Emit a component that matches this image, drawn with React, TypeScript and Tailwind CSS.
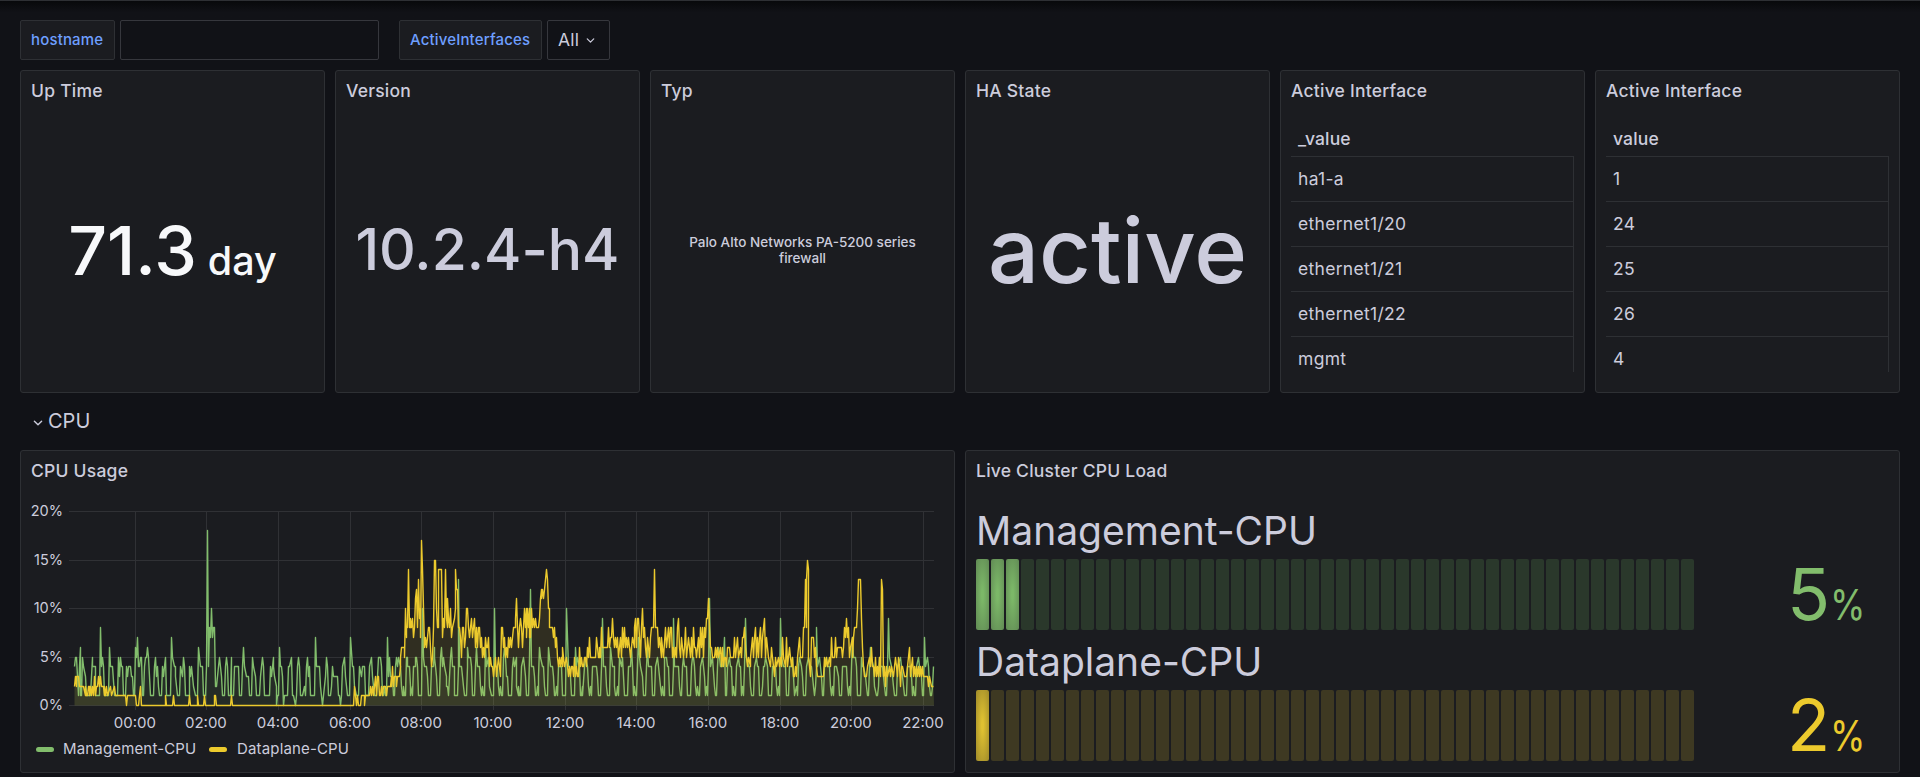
import type { ReactNode } from "react";

type Point = [number, number];

const GREEN = "#82bd6c";
const YELLOW = "#ecca2d";

/* Samples are "offset:percent"; three offset units make one pixel, from x = 60. */
const parse = (text: string, base: number): Point[] =>
  text
    .trim()
    .split(/[\s,]+/)
    .map((pair) => {
      const [x, v] = pair.split(":").map(Number);
      return [x + base, v] as Point;
    });

const managementNight = parse(
  `44:4,46:5,49:5,52:3,54:1,57:4,60:6,62:1,65:1,67:5,71:4,76:3,79:1,90:1,93:3,96:5,98:4,105:4,107:1,118:1,122:8,124:4,128:5,131:4,134:1,146:1,149:6,151:4,158:4,162:1,172:1,175:5,178:3,181:5,183:4,188:4,191:1,197:1,200:4,203:3,206:4,211:4,213:3,217:3,219:1,224:1,227:6,230:5,233:7,236:4,239:4,242:5,244:5,247:1,251:1,254:4,257:5,260:5,263:6,266:5,270:1,280:1,283:4,286:5,289:3,292:4,295:2,298:1,304:1,307:4,310:3,313:4,317:5,319:1,331:1,335:7,338:5,342:4,345:4,347:3,352:1,359:1,362:4,366:3,370:5,373:4,377:1,387:1,389:4,392:3,395:4,398:3,401:2,405:1,413:1,416:6,419:5,422:4,428:4,431:1,437:1,440:4,442:18,445:4,448:8,451:7,455:10,458:7,461:8,464:8,465:2,469:2,473:3,476:4,479:5,483:3,486:1,493:1,496:4,500:5,503:4,506:1,510:1,513:5,515:1,520:1,523:4,535:4,538:1,544:1,547:4,550:6,553:4,559:3,565:3,567:1,574:1,577:5,580:4,586:3,588:1,598:1,601:3,605:4,608:5,610:4,613:1,628:1,631:4,634:3,639:5,641:4,644:3,648:2,650:0,653:1,656:1,659:6,661:4,665:4,668:3,671:0,674:1,682:1,685:4,689:4,694:5,697:1,701:1,705:0,708:1,712:4,716:5,719:4,721:1,728:1,733:2,736:1,740:4,742:5,745:3,748:4,750:1,763:1,767:7,770:4,778:4,782:2,787:0,790:1,795:3,799:5,803:4,806:1,812:1,814:2,818:4,821:3,832:3,834:1,839:1,841:0,844:1,848:4,854:5,857:3,861:1,869:1,872:7,876:4,880:4,884:2,888:1,896:1,899:4,903:3,906:4,914:4,917:1,925:1,928:4,933:5,938:3,944:1,950:1,953:3,956:5`,
  0,
);

const managementDay = parse(
  `0:5,4:4,6:1,10:1,13:2,15:1,18:1,21:7,24:3,28:5,31:3,36:3,39:1,44:1,47:4,50:5,53:4,56:5,60:4,63:2,66:1,69:1,71:2,73:1,76:1,78:5,81:5,83:4,87:4,90:2,92:1,96:2,98:1,101:4,105:4,107:5,109:5,113:4,116:1,124:1,127:10,130:5,133:4,139:4,142:3,146:1,151:1,154:4,160:4,162:6,164:5,167:4,170:3,173:1,179:1,182:5,184:6,187:4,191:5,194:4,198:3,200:2,203:2,205:1,209:3,212:5,215:6,218:4,222:4,224:1,231:1,234:4,236:13,239:4,245:4,247:3,251:2,254:1,258:1,261:4,263:6,266:5,270:5,273:4,276:1,284:1,287:4,290:6,293:4,299:4,301:2,304:1,306:2,309:1,313:1,316:6,319:4,326:5,329:2,333:1,339:1,343:10,347:4,353:4,356:2,359:1,361:2,364:1,367:1,370:5,373:6,376:5,378:3,382:3,385:1,393:1,396:4,400:5,403:4,408:5,410:2,414:1,416:2,419:1,422:1,425:4,430:5,434:4,437:3,440:1,446:1,449:5,451:12,454:4,460:4,463:3,466:1,469:1,471:2,474:1,476:3,479:6,482:5,486:4,491:4,494:2,497:1,501:1,504:6,507:5,511:4,517:4,520:3,523:1,527:1,529:2,531:1,534:4,543:4,546:1,555:1,558:10,562:7,564:4,569:4,572:3,575:1,582:1,585:6,588:4,592:5,598:4,600:1,604:1,606:2,608:1,612:4,617:5,621:4,625:2,628:1,632:2,634:1,638:4,648:4,651:3,655:1,661:1,663:4,666:9,669:4,675:4,678:2,682:1,689:1,692:6,696:4,702:4,704:2,707:1,710:1,713:2,715:1,719:5,724:4,728:5,731:3,734:1,741:1,744:4,750:4,755:6,758:4,761:1,763:2,766:1,770:1,774:7,777:5,781:4,786:3,789:1,795:1,798:4,803:6,806:4,813:4,816:1,824:1,827:4,831:5,834:4,839:3`,
  960,
);

const managementEvening = parse(
  `0:2,3:1,6:2,9:1,12:1,14:5,18:5,21:4,26:4,28:1,36:1,39:4,41:9,44:4,55:4,57:2,60:1,64:1,67:4,70:5,74:4,80:4,83:1,91:1,94:4,97:5,101:5,104:4,107:2,110:1,113:2,116:1,119:1,122:4,126:5,130:4,133:3,136:1,140:2,142:1,145:4,148:11,151:4,158:5,162:2,166:1,170:1,173:4,176:6,180:4,187:4,191:5,194:7,196:1,199:1,203:4,208:5,212:4,215:4,217:1,220:2,223:1,227:1,230:4,235:5,238:4,242:4,244:1,247:2,250:1,254:4,257:9,260:5,264:4,268:4,271:2,275:1,279:1,283:4,290:5,293:4,296:4,299:1,303:1,306:2,309:4,313:4,317:5,321:4,324:1,333:1,336:4,345:4,349:2,352:1,356:2,359:1,362:9,365:5,370:4,376:4,379:1,386:1,389:4,393:4,398:5,400:3,404:1,408:2,411:1,414:4,419:5,425:4,428:3,431:1,436:1,440:4,445:5,450:4,453:4,456:3,459:2,462:1,465:2,468:4,470:8,473:4,479:5,483:3,486:1,491:1,494:4,499:5,503:4,508:4,511:2,514:1,517:2,520:1,523:4,528:4,534:3,537:1,545:1,548:4,559:4,562:2,565:1,568:2,571:1,574:4,577:7,580:5,585:5,588:4,592:1,600:1,604:5,607:4,611:4,615:3,618:2,621:1,625:1,627:4,632:6,635:5,641:4,644:2,648:1,652:1,655:2,658:5,662:4,668:4,672:2,675:1,680:1,683:4,686:9,689:5,693:4,697:3,701:2,704:1,710:1,713:4,720:5,724:4,728:3,732:1,738:1,742:4,750:4,754:3,757:1,760:2,763:1,766:1,769:4,774:5,778:4,783:3,786:1,790:1,794:7,797:4,801:5,804:4,807:2,811:1,815:1,818:2,821:4`,
  1800,
);

const dataplaneNight = parse(
  `43:2,46:3,48:2,50:3,56:3,58:2,70:2,75:1,77:2,79:1,82:1,84:2,87:2,89:1,92:2,95:1,98:2,100:1,102:3,104:3,106:1,109:2,113:2,116:3,119:2,122:3,125:2,130:2,132:1,134:2,137:1,140:2,142:1,151:2,154:1,164:2,167:1,196:1,198:0,201:1,227:1,230:0,236:0,238:1,241:2,244:0,315:0,317:1,320:0,338:0,341:1,344:0,386:0,388:1,391:0,411:0,413:1,416:0,431:0,434:1,437:0,462:0,464:1,466:1,469:0,511:0,514:1,518:0,880:0,883:2,886:1,889:0,892:1,895:0,902:0,905:1,912:1,914:0,916:1,928:1,930:2,933:1,936:2,940:1,943:2,946:3,949:1,952:3,955:3,958:1`,
  0,
);

const dataplaneDay = parse(
  `0:1,3:2,6:1,9:2,16:2,18:1,20:1,22:2,30:2,33:3,35:2,37:4,40:2,44:3,48:3,50:2,52:3,58:3,60:4,62:5,64:6,72:6,74:5,76:10,78:7,80:8,83:8,86:14,88:8,90:8,92:9,94:8,97:9,100:7,103:8,106:11,109:12,112:8,116:13,118:9,121:10,122:7,125:17,127:14,130:10,133:6,136:7,139:6,142:7,146:8,149:8,151:6,155:4,158:5,161:8,162:15,167:15,169:10,172:8,174:8,176:14,185:14,186:7,189:9,192:8,196:14,198:9,201:8,203:11,206:9,208:8,211:10,214:7,218:8,222:9,225:10,227:14,230:12,233:12,235:8,238:8,241:7,243:5,246:8,250:8,252:6,257:7,260:10,263:10,265:8,268:7,272:8,275:9,278:7,281:8,284:9,286:6,289:8,292:6,295:8,298:8,300:6,303:7,306:5,309:6,312:5,316:7,320:6,323:6,325:7,328:4,331:5,334:4,337:4,341:3,344:4,347:5,350:3,353:4,356:5,360:3,362:3,365:8,368:8,370:6,373:7,376:5,378:6,381:5,384:7,387:6,391:7,394:6,397:7,400:8,405:8,407:9,409:11,412:8,415:6,418:8,421:9,424:8,427:6,430:8,433:10,435:8,438:10,440:7,443:10,445:8,447:10,449:7,452:7,454:10,457:8,460:9,463:8,466:9,469:8,475:8,478:9,480:11,483:12,485:11,488:12,490:11,493:12,496:13,499:14,502:13,505:10,507:10,509:8,517:8,519:7,522:8,525:6,528:7,531:5,534:4,537:5,540:4,543:5,546:4,548:6,551:5,554:4,558:5,562:4,565:3,568:4,571:3,573:4,578:4,581:3,584:5,586:3,589:4,592:3,595:3,598:6,600:4,603:5,606:4,609:4,612:5,617:5,620:4,623:6,626:5,629:7,632:5,645:5,648:7,651:6,654:5,657:5,659:6,662:5,664:8,667:6,682:6,684:8,687:6,690:7,694:7,697:9,700:7,703:6,707:7,710:6,712:7,715:5,718:6,722:7,724:5,727:8,730:6,733:8,736:6,739:7,742:6,745:7,748:6,751:5,755:6,758:7,762:6,764:8,767:9,770:6,773:9,775:9,778:7,780:5,783:8,787:10,790:7,793:8,796:6,799:5,802:7,805:6,808:5,811:7,814:8,820:8,824:14,827:8,833:8,836:6,839:7`,
  960,
);

const dataplaneEvening = parse(
  `0:6,3:5,5:7,8:6,11:5,15:8,18:6,24:8,27:6,31:8,34:8,37:5,40:6,43:5,46:6,49:5,53:8,56:9,59:6,62:5,65:7,69:5,72:6,75:8,79:5,82:6,86:7,90:5,93:7,96:5,100:8,103:6,107:6,110:5,114:7,118:5,120:8,123:6,127:8,130:5,133:8,137:7,140:9,143:9,146:11,149:8,152:6,155:6,158:5,163:5,166:6,169:5,172:6,176:5,180:6,184:4,187:6,190:4,193:5,196:5,199:4,203:6,209:6,211:5,220:5,223:7,226:5,230:6,233:7,236:5,240:6,243:5,246:7,250:7,253:8,256:6,259:5,263:4,266:5,270:4,272:5,276:7,279:5,282:7,286:8,289:5,292:7,295:5,298:7,301:8,304:5,308:7,313:9,316:5,319:7,323:6,326:5,330:4,333:6,336:5,340:4,343:3,346:5,350:4,354:5,358:4,361:5,365:4,368:7,371:5,375:4,379:7,383:4,387:6,390:5,394:4,397:5,399:3,404:3,407:4,410:3,413:5,418:7,422:5,427:5,430:8,434:8,436:13,439:8,440:13,443:15,445:14,446:5,449:4,452:3,455:7,461:7,464:5,467:6,470:4,473:3,490:3,493:5,497:4,500:5,503:4,507:5,510:4,514:7,517:5,522:5,527:7,530:5,533:6,545:6,547:5,550:6,553:8,556:7,559:9,562:7,565:8,568:5,572:6,576:7,578:5,581:7,583:8,589:8,592:10,595:13,602:13,604:9,608:6,611:4,614:3,620:3,623:4,627:5,630:4,633:6,636:4,640:4,643:3,646:5,649:3,652:4,655:3,658:5,661:3,665:13,668:12,670:3,673:4,677:2,680:4,683:3,687:4,690:3,695:4,699:3,702:4,705:5,708:4,712:3,715:5,718:4,721:2,724:4,728:4,732:3,740:3,743:4,747:6,750:3,753:4,757:5,760:3,763:4,766:3,769:4,772:3,775:4,778:3,781:4,784:3,787:4,790:3,802:3,806:2,809:3,814:2,821:2`,
  1800,
);

const management = [...managementNight, ...managementDay, ...managementEvening];
const dataplane = [...dataplaneNight, ...dataplaneDay, ...dataplaneEvening];

const toLine = (points: Point[]) =>
  points
    .map(([x, v], i) => `${i ? "L" : "M"}${Math.round(60 + (x - 1) / 3) + 0.5} ${Math.round(705 - v * 9.7) + 0.5}`)
    .join("");

const toArea = (points: Point[]) => `${toLine(points)}L934 705.5L74.5 705.5Z`;

function Panel({ title, children, className }: { title: string; children: ReactNode; className?: string }) {
  return (
    <section
      className={`flex min-w-0 flex-col overflow-hidden rounded-[3px] border border-[#2e3034] bg-[#1b1c20] ${className ?? ""}`}
    >
      <h2 className="flex h-10 shrink-0 items-center px-[10px] text-[17.5px] leading-[26px] font-medium tracking-[0.23px]">
        {title}
      </h2>
      {children}
    </section>
  );
}

function ChevronDown({ className }: { className?: string }) {
  return (
    <svg viewBox="0 0 10 10" className={className} fill="none" stroke="currentColor" strokeWidth="1.4" strokeLinecap="round" strokeLinejoin="round">
      <path d="M1.4 3.2 5 6.8 8.6 3.2" />
    </svg>
  );
}

function InterfaceTable({ header, rows }: { header: string; rows: string[] }) {
  return (
    <div className="mx-[10px] mt-[10px] h-[251px] overflow-hidden text-[17.5px] leading-[26px] tracking-[0.3px]">
      <div className="flex h-[35px] items-center px-[7px] pt-px font-medium tracking-[0.16px]">{header}</div>
      <div className="border-t border-r border-[#2e3034]">
        {rows.map((row) => (
          <div key={row} className="flex h-[45px] items-center border-b border-[#2e3034] px-[7px]">
            {row}
          </div>
        ))}
      </div>
    </div>
  );
}

function UsageChart() {
  const hours = ["00:00", "02:00", "04:00", "06:00", "08:00", "10:00", "12:00", "14:00", "16:00", "18:00", "20:00", "22:00"];
  const ticks = [135.5, 206.5, 278.5, 350.5, 421.5, 493.5, 565.5, 636.5, 708.5, 780.5, 851.5, 923.5];
  const levels: Point[] = [
    [20, 511.5],
    [15, 560.5],
    [10, 608.5],
    [5, 657.5],
    [0, 705.5],
  ];
  return (
    <svg viewBox="21 491 933 244" className="block h-[244px] w-[933px] shrink-0">
      <g stroke="#303135" strokeWidth="1">
        {levels.map(([v, y]) => (
          <path key={v} d={`M69 ${y}H934`} />
        ))}
        {ticks.map((x) => (
          <path key={x} d={`M${x} 511V710`} />
        ))}
      </g>
      <path d={toArea(management)} fill={GREEN} fillOpacity="0.1" />
      <path d={toLine(management)} fill="none" stroke={GREEN} strokeWidth="1.4" strokeLinejoin="round" />
      <path d={toArea(dataplane)} fill={YELLOW} fillOpacity="0.1" />
      <path d={toLine(dataplane)} fill="none" stroke={YELLOW} strokeWidth="1.4" strokeLinejoin="round" />
      <g fill="#ccccdc" fontSize="15" className="font-[Inter,sans-serif]">
        {levels.map(([v, y]) => (
          <text key={v} x="63" y={y + 4.8} textAnchor="end" fontSize="14.5">
            {v}%
          </text>
        ))}
        {hours.map((h, i) => (
          <text key={h} x={ticks[i] - 0.6} y="728.3" textAnchor="middle">
            {h}
          </text>
        ))}
      </g>
    </svg>
  );
}

function Gauge({ label, value, lit, color }: { label: string; value: number; lit: number; color: "green" | "yellow" }) {
  const on =
    color === "green"
      ? "bg-[radial-gradient(#7cb868_10%,#618a54)]"
      : "bg-[radial-gradient(#dfc131_10%,#9f8a2a)]";
  const off = color === "green" ? "bg-[#2a382b]" : "bg-[#3e3922]";
  return (
    <div className="flex h-[131px] flex-col">
      <div className="h-[60px] pt-1 text-[39px] leading-[56px]">{label}</div>
      <div className="flex h-[71px]">
        <div className="flex gap-[2px]">
          {Array.from({ length: 48 }, (_, i) => (
            <div key={i} className={`h-[71px] w-[13px] rounded-[2px] ${i < lit ? on : off}`} />
          ))}
        </div>
        <div
          className={`ml-[93px] flex items-baseline leading-[71px] ${color === "green" ? "text-[#82bd6c]" : "text-[#ecca2d]"}`}
        >
          <span className="text-[71px]">{value}</span>
          <span className="inline-block origin-left scale-x-[0.86] text-[42px]">%</span>
        </div>
      </div>
    </div>
  );
}

const swatch = "h-[5px] w-[18px] rounded-full";

export default function App() {
  return (
    <main className="h-[777px] w-[1920px] overflow-hidden border-t border-[#2e3034] bg-[#111217] font-[Inter,sans-serif] text-[#ccccdc]">
      <div className="h-[19px] bg-linear-to-b from-[#08090b] to-[#111217] to-60%" />
      <div className="flex h-10 px-5 text-[15px] tracking-[0.16px]">
        <div className="flex w-[95px] items-center rounded-[2px] border border-[#2e3034] bg-[#1b1c20] pl-[10px] font-medium text-[#6e9fff]">
          hostname
        </div>
        <div className="ml-[5px] w-[259px] rounded-[2px] border border-[#36373d]" />
        <div className="ml-5 flex w-[143px] items-center rounded-[2px] border border-[#2e3034] bg-[#1b1c20] pl-[10px] font-medium text-[#6e9fff]">
          ActiveInterfaces
        </div>
        <div className="ml-[5px] flex w-[63px] items-center rounded-[2px] border border-[#36373d] pl-[10px] text-[17.5px]">
          All
          <ChevronDown className="ml-[7px] size-[9px]" />
        </div>
      </div>

      <div className="mt-[10px] grid h-[323px] grid-cols-6 gap-[10px] px-5">
        <Panel title="Up Time">
          <div className="flex flex-1 items-baseline justify-center pt-[96px] leading-[87px] font-medium text-[#f7f8fa]">
            <span className="text-[68px]">71.3</span>
            <span className="ml-[11px] text-[39.5px]">day</span>
          </div>
        </Panel>
        <Panel title="Version">
          <div className="pt-[97px] text-center text-[57px] leading-[84px] font-medium">10.2.4-h4</div>
        </Panel>
        <Panel title="Typ">
          <div className="px-[20px] pt-[123px] text-center text-[13.5px] leading-4 font-medium">
            Palo Alto Networks PA-5200 series firewall
          </div>
        </Panel>
        <Panel title="HA State">
          <div className="pt-[86px] text-center text-[90px] leading-[108px] font-medium">active</div>
        </Panel>
        <Panel title="Active Interface">
          <InterfaceTable header="_value" rows={["ha1-a", "ethernet1/20", "ethernet1/21", "ethernet1/22", "mgmt"]} />
        </Panel>
        <Panel title="Active Interface">
          <InterfaceTable header="value" rows={["1", "24", "25", "26", "4"]} />
        </Panel>
      </div>

      <div className="flex h-[57px] items-center px-[33px] pb-[2px] text-[20px]">
        <ChevronDown className="mt-1 mr-[5px] size-[10px]" />
        <span>CPU</span>
      </div>

      <div className="grid h-[323px] grid-cols-2 gap-[10px] px-5">
        <Panel title="CPU Usage">
          <UsageChart />
          <div className="flex h-[28px] items-center pl-[15px] text-[15px] tracking-[0.16px]">
            <span className={`${swatch} bg-[#82bd6c]`} />
            <span className="ml-[9px] w-[146px]">Management-CPU</span>
            <span className={`${swatch} bg-[#ecca2d]`} />
            <span className="ml-[10px]">Dataplane-CPU</span>
          </div>
        </Panel>
        <Panel title="Live Cluster CPU Load">
          <div className="px-[10px] pt-[8px]">
            <Gauge label="Management-CPU" value={5} lit={3} color="green" />
            <Gauge label="Dataplane-CPU" value={2} lit={1} color="yellow" />
          </div>
        </Panel>
      </div>
    </main>
  );
}
